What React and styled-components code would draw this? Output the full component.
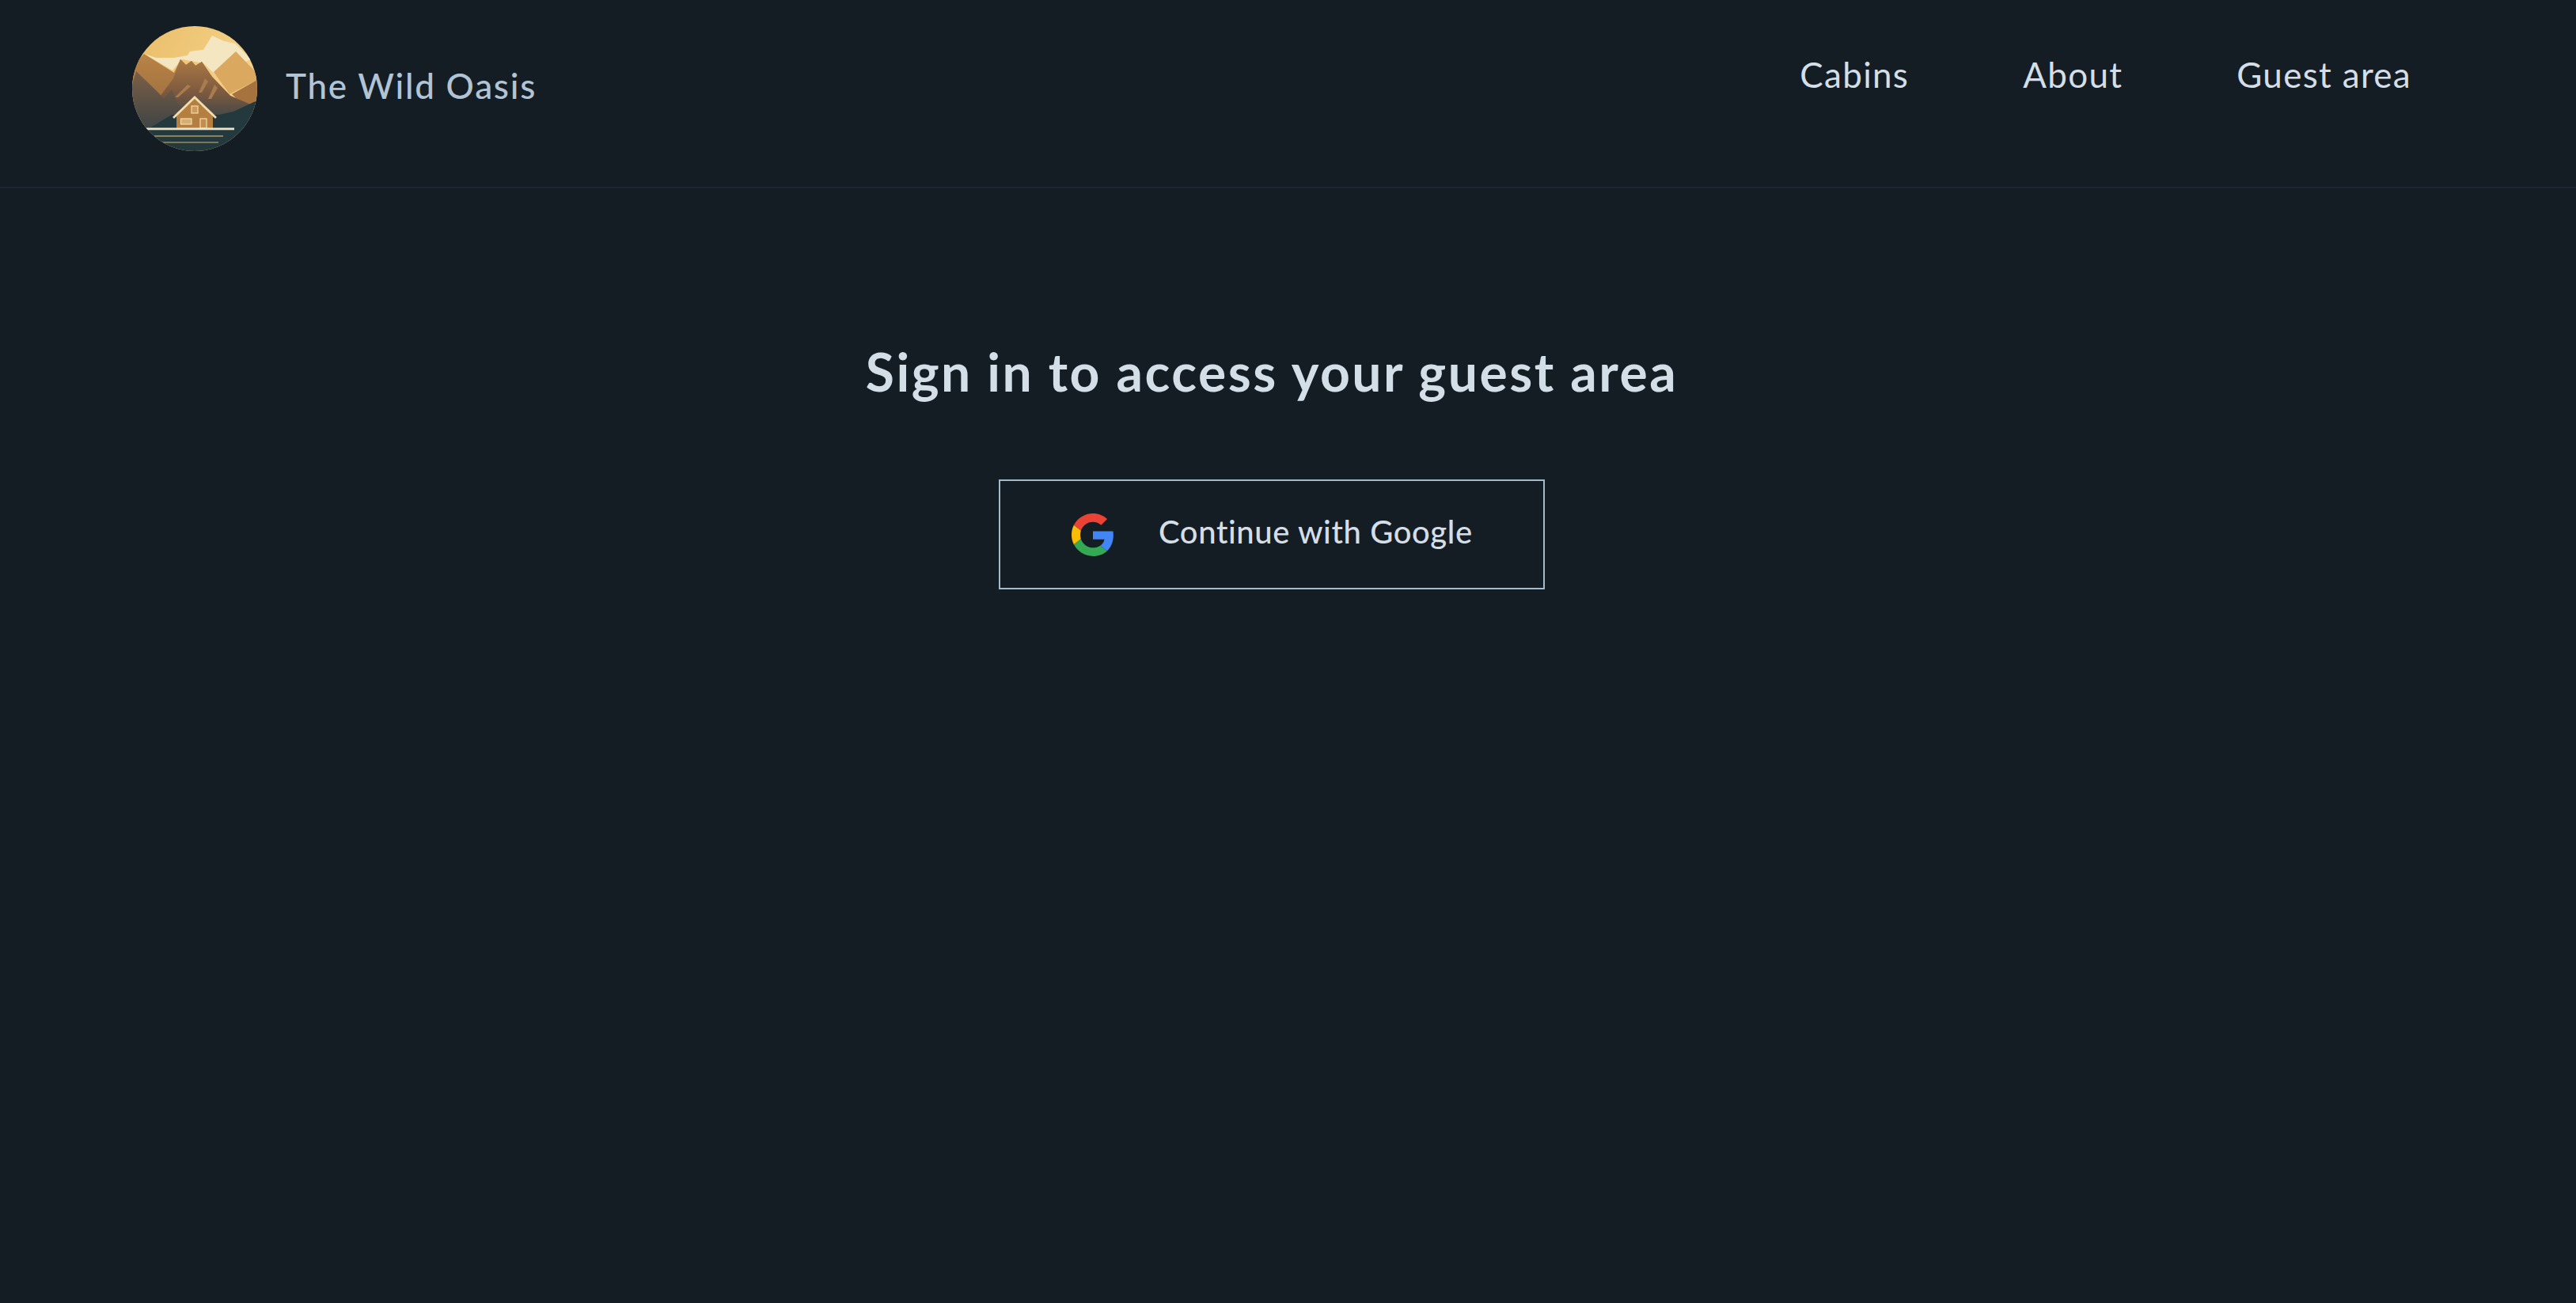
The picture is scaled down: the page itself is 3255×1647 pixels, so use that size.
import React from 'react';
import styled, { createGlobalStyle } from 'styled-components';

const GlobalStyle = createGlobalStyle`
  * {
    box-sizing: border-box;
  }

  body {
    margin: 0;
    background-color: #141c24;
    color: #d4dee7;
    font-family: Lato, "Liberation Sans", sans-serif;
  }
`;

const Page = styled.div`
  display: flex;
  flex-direction: column;
  height: 1647px;
  overflow: hidden;
  background-color: #141c24;
`;

const Header = styled.header`
  display: flex;
  align-items: flex-start;
  justify-content: space-between;
  flex-shrink: 0;
  height: 238px;
  padding: 33px 208px 0 167px;
  border-bottom: 2px solid #1b2631;
`;

const Brand = styled.a`
  display: flex;
  align-items: center;
  gap: 36px;
  color: #b1c4d6;
  font-size: 44px;
  font-weight: 500;
  letter-spacing: 1.75px;
`;

const BrandName = styled.span`
  margin-bottom: 8px;
`;

const Nav = styled.nav`
  display: flex;
  gap: 144px;
  padding-top: 31px;
`;

const NavLink = styled.a`
  color: #d4dee7;
  font-size: 44px;
  letter-spacing: 1.3px;
  line-height: 60px;
`;

const Main = styled.main`
  display: flex;
  flex-direction: column;
  align-items: center;
  padding: 192px 41px 0 0;
`;

const Title = styled.h2`
  margin: 0 0 96px;
  color: #d4dee7;
  font-size: 66px;
  font-weight: 700;
  letter-spacing: 2.5px;
  line-height: 80px;
`;

const GoogleButton = styled.button`
  display: flex;
  align-items: center;
  gap: 56px;
  width: 690px;
  height: 139px;
  padding: 0 0 0 90px;
  border: 2px solid #a3b9ce;
  background: transparent;
  color: #d4dee7;
  font-family: inherit;
  font-size: 40px;
  font-weight: 500;
  letter-spacing: 0.6px;
`;

const ButtonLabel = styled.span`
  margin-bottom: 8px;
`;

function Logo() {
  return (
    <svg width="158" height="158" viewBox="0 0 158 158" aria-label="The Wild Oasis logo">
      <defs>
        <clipPath id="disc">
          <circle cx="79" cy="79" r="79" />
        </clipPath>
        <linearGradient id="sky" x1="0" y1="0" x2="1" y2="0.5">
          <stop offset="0" stopColor="#e9bd68" />
          <stop offset="1" stopColor="#f6d48e" />
        </linearGradient>
        <linearGradient id="back" x1="0" y1="0" x2="0" y2="1">
          <stop offset="0" stopColor="#b98345" />
          <stop offset="1" stopColor="#96693f" />
        </linearGradient>
        <linearGradient id="ridge" x1="0" y1="0" x2="0" y2="1">
          <stop offset="0" stopColor="#ab7843" />
          <stop offset="0.5" stopColor="#7d5a3f" />
          <stop offset="1" stopColor="#34444a" />
        </linearGradient>
        <linearGradient id="left" x1="0" y1="0" x2="0" y2="1">
          <stop offset="0" stopColor="#7d5f45" />
          <stop offset="1" stopColor="#3d4445" />
        </linearGradient>
      </defs>
      <g clipPath="url(#disc)">
        <rect width="158" height="158" fill="url(#sky)" />
        <path d="M15 35 L30 40 L53 40 L70 37 L73 32 L90 30 L101 12 L116 19 L130 22 L150 42 L106 62 L90 47 L63 42 L51 56 Z" fill="#f5e6c2" />
        <path d="M131 32 L158 60 L158 68 L123 86 L103 58 Z" fill="#dba85f" />
        <path d="M158 68 L126 86 L146 106 L158 92 Z" fill="#a6733f" />
        <path d="M15 35 L53 59 L61 42 L68 49 L75 44 L80 50 L88 45 L101 64 L124 88 L152 100 L146 112 L60 120 L0 80 L0 52 Z" fill="url(#back)" />
        <path d="M52 66 L61 42 L68 49 L75 44 L80 50 L88 45 L101 64 L124 88 L152 100 L146 122 L40 124 L30 96 Z" fill="url(#ridge)" />
        <path d="M0 74 L5 57 L33 84 L40 92 L50 80 L58 98 L70 108 L60 130 L0 130 Z" fill="url(#left)" />
        <path d="M92 66 L84 84 L88 84 L96 70 Z M104 74 L96 92 L100 92 L108 78 Z M70 74 L54 90 L58 90 L74 76 Z" fill="#a87c4e" />
        <path d="M20 130 L50 112 L110 112 L128 108 L158 94 L158 158 L0 158 L0 130 Z" fill="#24393e" />
        <path d="M56 110 L79 91 L102 110 L102 129 L56 129 Z" fill="#b67f42" />
        <path d="M52 116 L79 90 L106 116" fill="none" stroke="#f1dcab" strokeWidth="2.8" />
        <rect x="75" y="101" width="8" height="9" fill="#cf9a58" stroke="#f1dcab" strokeWidth="1.2" />
        <rect x="61.5" y="117" width="13.5" height="7" fill="#d8ae70" stroke="#f1dcab" strokeWidth="1.2" />
        <rect x="86" y="117" width="8" height="12" fill="#c28d4e" stroke="#f1dcab" strokeWidth="1.2" />
        <rect x="18" y="128.5" width="111" height="2.8" fill="#eee4c8" />
        <rect x="28" y="138" width="87" height="2" fill="#8a8258" />
        <rect x="38" y="146" width="71" height="2" fill="#7c7856" />
      </g>
    </svg>
  );
}

function GoogleIcon() {
  return (
    <svg width="54" height="54" viewBox="0 0 48 48" aria-hidden="true">
      <path fill="#EA4335" d="M24 9.5c3.54 0 6.71 1.22 9.21 3.6l6.85-6.85C35.9 2.38 30.47 0 24 0 14.62 0 6.51 5.38 2.56 13.22l7.98 6.19C12.43 13.72 17.74 9.5 24 9.5z" />
      <path fill="#4285F4" d="M46.98 24.55c0-1.57-.15-3.09-.38-4.55H24v9.02h12.94c-.58 2.96-2.26 5.48-4.78 7.18l7.73 6c4.51-4.18 7.09-10.36 7.09-17.65z" />
      <path fill="#FBBC05" d="M10.53 28.59c-.48-1.45-.76-2.99-.76-4.59s.27-3.14.76-4.59l-7.98-6.19C.92 16.46 0 20.12 0 24c0 3.88.92 7.54 2.56 10.78l7.97-6.19z" />
      <path fill="#34A853" d="M24 48c6.48 0 11.93-2.13 15.89-5.81l-7.73-6c-2.15 1.45-4.92 2.3-8.16 2.3-6.26 0-11.57-4.22-13.47-9.91l-7.98 6.19C6.51 42.62 14.62 48 24 48z" />
    </svg>
  );
}

function App() {
  return (
    <Page>
      <GlobalStyle />
      <Header>
        <Brand>
          <Logo />
          <BrandName>The Wild Oasis</BrandName>
        </Brand>
        <Nav>
          <NavLink>Cabins</NavLink>
          <NavLink>About</NavLink>
          <NavLink>Guest area</NavLink>
        </Nav>
      </Header>
      <Main>
        <Title>Sign in to access your guest area</Title>
        <GoogleButton>
          <GoogleIcon />
          <ButtonLabel>Continue with Google</ButtonLabel>
        </GoogleButton>
      </Main>
    </Page>
  );
}

export default App;
